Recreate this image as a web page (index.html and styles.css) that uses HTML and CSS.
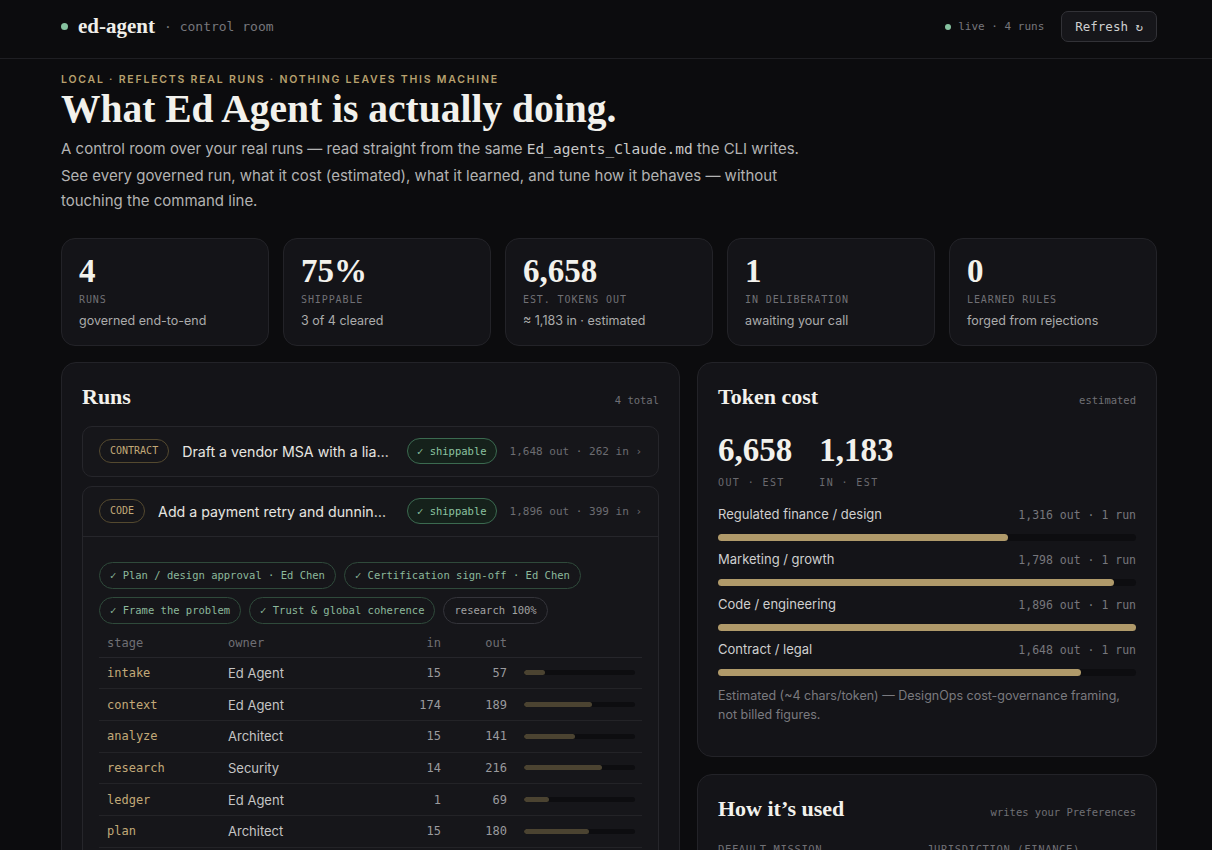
FILE: index.html
```html
<!DOCTYPE html>
<html lang="en">
<head>
    <meta charset="UTF-8">
    <meta name="viewport" content="width=device-width, initial-scale=1.0">
    <title>ed-agent · control room</title>
    <link rel="stylesheet" href="styles.css">
</head>
<body>
    <header class="topbar">
        <div class="topbar-inner">
            <div class="brand">
                <span class="dot"></span>
                <span class="brand-name">ed-agent</span>
                <span class="brand-sub">· control room</span>
            </div>
            <div class="status">
                <span class="dot dot-sm"></span>
                <span class="status-text">live · 4 runs</span>
                <button class="btn">Refresh ↻</button>
            </div>
        </div>
    </header>

    <main class="wrap">
        <section class="hero">
            <p class="eyebrow">Local · reflects real runs · nothing leaves this machine</p>
            <h1>What Ed Agent is actually doing.</h1>
            <p class="lede">A control room over your real runs — read straight from the same <code>Ed_agents_Claude.md</code> the CLI writes. See every governed run, what it cost (estimated), what it learned, and tune how it behaves — without touching the command line.</p>
        </section>

        <section class="stats">
            <div class="stat">
                <div class="stat-num">4</div>
                <div class="stat-label">Runs</div>
                <div class="stat-sub">governed end-to-end</div>
            </div>
            <div class="stat">
                <div class="stat-num">75%</div>
                <div class="stat-label">Shippable</div>
                <div class="stat-sub">3 of 4 cleared</div>
            </div>
            <div class="stat">
                <div class="stat-num">6,658</div>
                <div class="stat-label">Est. tokens out</div>
                <div class="stat-sub">≈ 1,183 in · estimated</div>
            </div>
            <div class="stat">
                <div class="stat-num">1</div>
                <div class="stat-label">In deliberation</div>
                <div class="stat-sub">awaiting your call</div>
            </div>
            <div class="stat">
                <div class="stat-num">0</div>
                <div class="stat-label">Learned rules</div>
                <div class="stat-sub">forged from rejections</div>
            </div>
        </section>

        <div class="columns">
            <section class="panel">
                <div class="panel-head">
                    <h2>Runs</h2>
                    <span class="panel-meta">4 total</span>
                </div>

                <div class="run">
                    <div class="run-head">
                        <span class="kind">Contract</span>
                        <span class="run-title">Draft a vendor MSA with a liability cap and data-processing addendum</span>
                        <span class="badge">✓ shippable</span>
                        <span class="run-meta">1,648 out · 262 in ›</span>
                    </div>
                </div>

                <div class="run">
                    <div class="run-head">
                        <span class="kind">Code</span>
                        <span class="run-title">Add a payment retry and dunning flow to billing</span>
                        <span class="badge">✓ shippable</span>
                        <span class="run-meta">1,896 out · 399 in ›</span>
                    </div>
                    <div class="run-body">
                        <div class="chips">
                            <span class="chip">✓ Plan / design approval · Ed Chen</span>
                            <span class="chip">✓ Certification sign-off · Ed Chen</span>
                            <span class="chip">✓ Frame the problem</span>
                            <span class="chip">✓ Trust &amp; global coherence</span>
                            <span class="chip chip-muted">research 100%</span>
                        </div>
                        <table class="stages">
                            <thead>
                                <tr><th class="c-stage">stage</th><th class="c-owner">owner</th><th class="c-num">in</th><th class="c-out">out</th><th class="c-bar"></th></tr>
                            </thead>
                            <tbody>
                                <tr><td class="c-stage">intake</td><td class="c-owner">Ed Agent</td><td class="c-num">15</td><td class="c-out">57</td><td class="c-bar"><div class="mini"><div class="mini-fill" style="width:18.5%"></div></div></td></tr>
                                <tr><td class="c-stage">context</td><td class="c-owner">Ed Agent</td><td class="c-num">174</td><td class="c-out">189</td><td class="c-bar"><div class="mini"><div class="mini-fill" style="width:61.4%"></div></div></td></tr>
                                <tr><td class="c-stage">analyze</td><td class="c-owner">Architect</td><td class="c-num">15</td><td class="c-out">141</td><td class="c-bar"><div class="mini"><div class="mini-fill" style="width:45.8%"></div></div></td></tr>
                                <tr><td class="c-stage">research</td><td class="c-owner">Security</td><td class="c-num">14</td><td class="c-out">216</td><td class="c-bar"><div class="mini"><div class="mini-fill" style="width:70.1%"></div></div></td></tr>
                                <tr><td class="c-stage">ledger</td><td class="c-owner">Ed Agent</td><td class="c-num">1</td><td class="c-out">69</td><td class="c-bar"><div class="mini"><div class="mini-fill" style="width:22.4%"></div></div></td></tr>
                                <tr><td class="c-stage">plan</td><td class="c-owner">Architect</td><td class="c-num">15</td><td class="c-out">180</td><td class="c-bar"><div class="mini"><div class="mini-fill" style="width:58.4%"></div></div></td></tr>
                                <tr><td class="c-stage">build</td><td class="c-owner">Engineer</td><td class="c-num">142</td><td class="c-out">308</td><td class="c-bar"><div class="mini"><div class="mini-fill" style="width:100%"></div></div></td></tr>
                            </tbody>
                        </table>
                    </div>
                </div>
            </section>

            <div class="side">
                <section class="panel">
                    <div class="panel-head">
                        <h2>Token cost</h2>
                        <span class="panel-meta">estimated</span>
                    </div>
                    <div class="totals">
                        <div>
                            <div class="total-num">6,658</div>
                            <div class="total-label">Out · est</div>
                        </div>
                        <div>
                            <div class="total-num">1,183</div>
                            <div class="total-label">In · est</div>
                        </div>
                    </div>

                    <div class="cat">
                        <div class="cat-row"><span>Regulated finance / design</span><span class="cat-meta">1,316 out · 1 run</span></div>
                        <div class="bar"><div class="bar-fill" style="width:69.4%"></div></div>
                    </div>
                    <div class="cat">
                        <div class="cat-row"><span>Marketing / growth</span><span class="cat-meta">1,798 out · 1 run</span></div>
                        <div class="bar"><div class="bar-fill" style="width:94.8%"></div></div>
                    </div>
                    <div class="cat">
                        <div class="cat-row"><span>Code / engineering</span><span class="cat-meta">1,896 out · 1 run</span></div>
                        <div class="bar"><div class="bar-fill" style="width:100%"></div></div>
                    </div>
                    <div class="cat">
                        <div class="cat-row"><span>Contract / legal</span><span class="cat-meta">1,648 out · 1 run</span></div>
                        <div class="bar"><div class="bar-fill" style="width:86.9%"></div></div>
                    </div>

                    <p class="footnote">Estimated (~4 chars/token) — DesignOps cost-governance framing, not billed figures.</p>
                </section>

                <section class="panel">
                    <div class="panel-head">
                        <h2>How it’s used</h2>
                        <span class="panel-meta">writes your Preferences</span>
                    </div>
                    <div class="prefs">
                        <div class="pref-label">Default mission</div>
                        <div class="pref-label">Jurisdiction (finance)</div>
                    </div>
                </section>
            </div>
        </div>
    </main>
</body>
</html>
```

FILE: styles.css
```css
body{
    margin: 0;
    background: #0c0c0e;
    color: #ecebe6;
    font-family: Inter, "Noto Sans", sans-serif;
}

code{
    font-family: "DejaVu Sans Mono", "Liberation Mono", monospace;
}

/* top bar */
.topbar{
    border-bottom: 1px solid #1f1f23;
}
.topbar-inner{
    margin: 0 55px 0 61px;
    height: 53px;
    padding-bottom: 5px;
    display: flex;
    align-items: center;
    justify-content: space-between;
}
.brand{
    display: flex;
    align-items: center;
}
.dot{
    width: 7px;
    height: 7px;
    border-radius: 50%;
    background: #86c29f;
    display: inline-block;
}
.dot-sm{
    width: 6px;
    height: 6px;
}
.brand-name{
    font-family: "Liberation Serif", serif;
    font-weight: bold;
    font-size: 21px;
    margin-left: 10px;
    color: #efeee9;
}
.brand-sub{
    font-family: "DejaVu Sans Mono", monospace;
    font-size: 13px;
    color: #77777c;
    margin-left: 9px;
}
.status{
    display: flex;
    align-items: center;
}
.status-text{
    font-family: "DejaVu Sans Mono", monospace;
    font-size: 11px;
    color: #77777c;
    margin-left: 7px;
}
.btn{
    margin-left: 17px;
    height: 31px;
    padding: 0 13px;
    background: #16161a;
    border: 1px solid #323237;
    border-radius: 7px;
    color: #cfcfcf;
    font-family: "DejaVu Sans Mono", monospace;
    font-size: 12.5px;
}

/* page */
.wrap{
    margin: 0 55px 0 61px;
}

.hero{
    padding-top: 14px;
}
.eyebrow{
    margin: 0;
    font-size: 10.5px;
    font-weight: 600;
    letter-spacing: 0.17em;
    text-transform: uppercase;
    color: #b8a16e;
    line-height: 14px;
}
h1{
    margin: 0;
    font-family: "Liberation Serif", serif;
    font-weight: bold;
    font-size: 39.5px;
    line-height: 44px;
    color: #f2f1ec;
}
.lede{
    margin: 5px 0 0;
    max-width: 760px;
    font-size: 15px;
    line-height: 25.5px;
    color: #b3b3b3;
}
.lede code{
    font-size: 14.5px;
    color: #c9c9c9;
}

/* stats */
.stats{
    margin-top: 24px;
    display: grid;
    grid-template-columns: repeat(5, 1fr);
    gap: 14px;
}
.stat{
    background: #141418;
    border: 1px solid #232328;
    border-radius: 14px;
    padding: 14px 17px 17px;
}
.stat-num{
    font-family: "Liberation Serif", serif;
    font-weight: bold;
    font-size: 33px;
    line-height: 36px;
    color: #f2f1ec;
}
.stat-label{
    margin-top: 5px;
    font-family: "DejaVu Sans Mono", monospace;
    font-size: 10px;
    letter-spacing: 0.09em;
    text-transform: uppercase;
    color: #707075;
}
.stat-sub{
    margin-top: 8px;
    font-size: 12.5px;
    color: #ababab;
}

/* columns */
.columns{
    margin-top: 16px;
    display: grid;
    grid-template-columns: 619px 1fr;
    gap: 17px;
    align-items: start;
}
.side{
    display: flex;
    flex-direction: column;
    gap: 17px;
}
.panel{
    background: #141418;
    border: 1px solid #232328;
    border-radius: 15px;
    padding: 20px 20px 30px;
}
.panel-head{
    display: flex;
    align-items: baseline;
    justify-content: space-between;
    margin-bottom: 15px;
}
h2{
    margin: 0;
    font-family: "Liberation Serif", serif;
    font-weight: bold;
    font-size: 22px;
    line-height: 28px;
    color: #f2f1ec;
}
.panel-meta{
    font-family: "DejaVu Sans Mono", monospace;
    font-size: 10.5px;
    color: #707075;
}

/* runs */
.run{
    border: 1px solid #26262b;
    border-radius: 10px;
    background: #16161a;
    margin-bottom: 9px;
}
.run-head{
    height: 49px;
    padding: 0 16px;
    display: flex;
    align-items: center;
    gap: 13px;
}
.kind{
    flex: none;
    font-family: "DejaVu Sans Mono", monospace;
    font-size: 10px;
    text-transform: uppercase;
    color: #c2a978;
    border: 1px solid #54492f;
    border-radius: 12px;
    padding: 0 10px;
    height: 22px;
    line-height: 22px;
}
.run-title{
    flex: 1;
    min-width: 0;
    white-space: nowrap;
    overflow: hidden;
    text-overflow: ellipsis;
    font-size: 14.2px;
    color: #e6e5e0;
}
.badge{
    flex: none;
    font-family: "DejaVu Sans Mono", monospace;
    font-size: 10.5px;
    color: #8cc3a1;
    background: #15211b;
    border: 1px solid #3b6a50;
    border-radius: 13px;
    padding: 0 9px;
    height: 24px;
    line-height: 24px;
}
.run-meta{
    flex: none;
    font-family: "DejaVu Sans Mono", monospace;
    font-size: 11px;
    color: #6c6c71;
}
.run-body{
    border-top: 1px solid #26262b;
    padding: 25px 16px 0;
}
.chips{
    display: flex;
    flex-wrap: wrap;
    gap: 8px;
}
.chip{
    font-family: "DejaVu Sans Mono", monospace;
    font-size: 10.5px;
    color: #8cb99c;
    border: 1px solid #2f4a3b;
    border-radius: 14px;
    padding: 0 10px;
    height: 25px;
    line-height: 25px;
}
.chip-muted{
    color: #a2a2a2;
    border-color: #34343a;
}

.stages{
    width: 100%;
    margin-top: 5px;
    border-collapse: collapse;
    table-layout: fixed;
    font-family: "DejaVu Sans Mono", monospace;
    font-size: 12px;
}
.stages th{
    font-weight: normal;
    color: #6f6f74;
    text-align: left;
    height: 28px;
    border-bottom: 1px solid #26262b;
}
.stages td{
    height: 30.7px;
    border-bottom: 1px solid #232327;
    color: #9a9a9e;
}
.stages th, .stages td{
    padding: 0 8px;
}
.c-stage{
    width: 105px;
}
.stages td.c-stage{
    color: #c2a978;
}
.c-owner{
    width: 133px;
}
.stages td.c-owner{
    font-family: Inter, sans-serif;
    font-size: 13px;
    color: #c4c4c4;
}
.stages .c-num{
    width: 64px;
    text-align: right;
}
.stages .c-out{
    width: 50px;
    text-align: right;
}
.stages .c-bar{
    padding: 0 7px 0 9px;
}
.mini{
    height: 5px;
    border-radius: 3px;
    background: #0d0d10;
    overflow: hidden;
}
.mini-fill{
    height: 100%;
    background: #4b4331;
    border-radius: 3px;
}

/* token cost */
.totals{
    display: flex;
    gap: 27px;
    margin-top: 21px;
}
.total-num{
    font-family: "Liberation Serif", serif;
    font-weight: bold;
    font-size: 33px;
    line-height: 36px;
    color: #f2f1ec;
}
.total-label{
    margin-top: 9px;
    font-family: "DejaVu Sans Mono", monospace;
    font-size: 10px;
    letter-spacing: 0.14em;
    text-transform: uppercase;
    color: #6a6a6f;
}
.cat{
    margin-top: 10px;
}
.totals + .cat{
    margin-top: 18px;
}
.cat-row{
    display: flex;
    justify-content: space-between;
    align-items: baseline;
    font-size: 13px;
    color: #cfcfcf;
}
.cat-meta{
    font-family: "DejaVu Sans Mono", monospace;
    font-size: 11.5px;
    color: #77777c;
}
.bar{
    margin-top: 12px;
    height: 7px;
    border-radius: 4px;
    background: #0d0d10;
}
.bar-fill{
    height: 100%;
    border-radius: 4px;
    background: #b09a6a;
}
.footnote{
    margin: 10px 0 1px;
    font-size: 12.5px;
    line-height: 19.5px;
    color: #7a7a7f;
}

.prefs{
    display: grid;
    grid-template-columns: 1fr 1fr;
    margin-top: 20px;
}
.pref-label{
    font-family: "DejaVu Sans Mono", monospace;
    font-size: 10.5px;
    letter-spacing: 0.06em;
    text-transform: uppercase;
    color: #707075;
}
```
